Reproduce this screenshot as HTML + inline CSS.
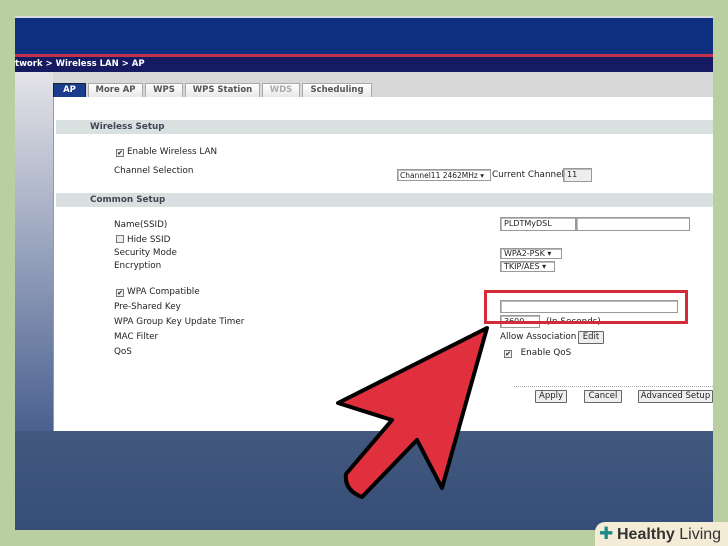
<!DOCTYPE html><html><head><style>
*{margin:0;padding:0;box-sizing:border-box}
html,body{width:728px;height:546px;overflow:hidden}
body{background:#b9cfa2;position:relative;font-family:"DejaVu Sans","Liberation Sans",sans-serif;font-size:8.8px;color:#222}
.a{position:absolute;white-space:nowrap}
.lbl{position:absolute;left:114px;white-space:nowrap}
.box{position:absolute;border:1px solid #999;background:#fff;font-size:8px;padding:1px 3px;box-shadow:inset 1px 1px 0 #bbb;white-space:nowrap}
.btn{position:absolute;border:1px solid #666;background:#eee;font-size:8.5px;text-align:center;line-height:11px;border-radius:1px}
.cb{display:inline-block;width:8px;height:8px;border:1px solid #777;background:#eee;vertical-align:-1px;margin-right:3px;font-size:7px;line-height:6px;text-align:center}
.tab{position:absolute;top:83px;height:14px;border:1px solid #aaa;border-bottom:none;background:linear-gradient(#fff,#e8e8e8);color:#555;font-weight:bold;font-size:8.5px;text-align:center;line-height:13px}
</style></head><body>
<div class="a" style="left:15px;top:16px;width:698px;height:514px;background:#d8d8d8"></div>
<div class="a" style="left:15px;top:18px;width:698px;height:36px;background:#0e2e80"></div>
<div class="a" style="left:15px;top:54px;width:698px;height:3px;background:#c3304c"></div>
<div class="a" style="left:15px;top:57px;width:698px;height:15px;background:#161a60;color:#fff;font-weight:bold;font-size:8.5px;line-height:14px">twork &gt; Wireless LAN &gt; AP</div>
<div class="a" style="left:15px;top:72px;width:38px;height:360px;background:linear-gradient(#e4e4e8,#4a6090)"></div>
<div class="a" style="left:15px;top:431px;width:698px;height:99px;background:linear-gradient(#42587e,#364e78)"></div>
<div class="a" style="left:53px;top:97px;width:660px;height:334px;background:#fff;border-left:1px solid #999"></div>
<div class="tab" style="left:53px;width:33px;background:#1b3c8c;color:#fff;border-color:#123">AP</div>
<div class="tab" style="left:88px;width:55px">More AP</div>
<div class="tab" style="left:145px;width:38px">WPS</div>
<div class="tab" style="left:185px;width:75px">WPS Station</div>
<div class="tab" style="left:262px;width:38px;color:#aaa">WDS</div>
<div class="tab" style="left:302px;width:70px">Scheduling</div>
<div class="a" style="left:56px;top:120px;width:657px;height:14px;background:#d8e0e0;color:#445;font-weight:bold;line-height:14px;padding-left:34px">Wireless Setup</div>
<div class="a" style="left:56px;top:193px;width:657px;height:14px;background:#d8e0e0;color:#445;font-weight:bold;line-height:14px;padding-left:34px">Common Setup</div>
<div class="lbl" style="top:147px;left:116px"><span class="cb">✔</span>Enable Wireless LAN</div>
<div class="lbl" style="top:166px">Channel Selection</div>
<div class="lbl" style="top:220px">Name(SSID)</div>
<div class="lbl" style="top:235px;left:116px"><span class="cb"></span>Hide SSID</div>
<div class="lbl" style="top:248px">Security Mode</div>
<div class="lbl" style="top:261px">Encryption</div>
<div class="lbl" style="top:287px;left:116px"><span class="cb">✔</span>WPA Compatible</div>
<div class="lbl" style="top:302px">Pre-Shared Key</div>
<div class="lbl" style="top:317px">WPA Group Key Update Timer</div>
<div class="lbl" style="top:332px">MAC Filter</div>
<div class="lbl" style="top:347px">QoS</div>
<div class="box" style="left:397px;top:169px;width:94px;height:12px;line-height:9px;font-size:7.5px;padding:1px 2px">Channel11 2462MHz ▾</div>
<div class="a" style="left:492px;top:170px">Current Channel:</div>
<div class="box" style="left:563px;top:168px;width:29px;height:14px;background:#eee">11</div>
<div class="box" style="left:500px;top:217px;width:76px;height:14px">PLDTMyDSL</div>
<div class="box" style="left:576px;top:217px;width:114px;height:14px"></div>
<div class="box" style="left:500px;top:248px;width:62px;height:11px;line-height:8px">WPA2-PSK ▾</div>
<div class="box" style="left:500px;top:261px;width:55px;height:11px;line-height:8px">TKIP/AES ▾</div>
<div class="box" style="left:500px;top:300px;width:178px;height:13px"></div>
<div class="box" style="left:500px;top:315px;width:40px;height:13px">3600</div>
<div class="a" style="left:546px;top:317px">(In Seconds)</div>
<div class="a" style="left:484px;top:290px;width:204px;height:34px;border:3px solid #d42a3a"></div>
<div class="a" style="left:500px;top:332px">Allow Association</div>
<div class="btn" style="left:578px;top:331px;width:26px;height:13px">Edit</div>
<div class="a" style="left:504px;top:348px"><span class="cb">✔</span>&nbsp;&nbsp;Enable QoS</div>
<div class="a" style="left:514px;top:386px;width:199px;border-top:1px dotted #aaa"></div>
<div class="btn" style="left:535px;top:390px;width:32px;height:13px">Apply</div>
<div class="btn" style="left:584px;top:390px;width:38px;height:13px">Cancel</div>
<div class="btn" style="left:638px;top:390px;width:75px;height:13px">Advanced Setup</div>
<svg class="a" style="left:0;top:0" width="728" height="546"><path d="M487 328 L338 403 L392 420 L346 474 Q344 490 362 497 L417 440 L442 488 Z" fill="#e0303e" stroke="#000" stroke-width="4" stroke-linejoin="round"/></svg>
<div class="a" style="left:595px;top:522px;width:133px;height:24px;background:#f4ecd6;border-radius:10px 0 0 0"></div>
<div class="a" style="left:599px;top:524px;font-size:17px;font-weight:bold;color:#1f8a85;line-height:20px">✚</div>
<div class="a" style="left:617px;top:525px;font-family:'Liberation Sans',sans-serif;font-size:16px;color:#333;line-height:20px"><b>Healthy</b> Living</div>
</body></html>
